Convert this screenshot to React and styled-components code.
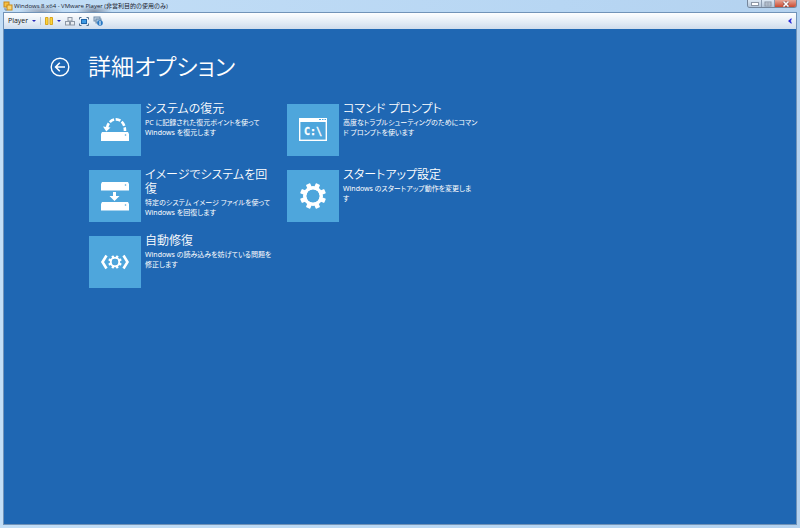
import React from 'react'
import styled, { createGlobalStyle } from 'styled-components'

const GlobalStyle = createGlobalStyle`
  * {
    box-sizing: border-box;
  }
  body {
    margin: 0;
    font-family: 'Noto Sans', 'Noto Sans CJK JP', sans-serif;
  }
  button {
    margin: 0;
    padding: 0;
    border: 0;
    background: none;
    color: inherit;
    font-family: inherit;
    font-feature-settings: inherit;
  }
`

const RestoreIcon = () => (
  <svg viewBox="0 0 52 52" fill="none" aria-hidden="true">
    <path d="M13 28H39L40 30V37H12V30Z" fill="#fff" />
    <path d="M18 24C20 12 36 12 36 27" stroke="#fff" strokeWidth="2.6" strokeDasharray="5 1.6" />
    <path d="M14 22.5L21.5 23.5L17.3 27.6Z" fill="#fff" />
    <circle cx="36.5" cy="31" r="0.8" fill="#4ea6dc" />
  </svg>
)

const ImageIcon = () => (
  <svg viewBox="0 0 52 52" fill="#fff" aria-hidden="true">
    <path d="M13 12H39L40 14V20.5H12V14Z" />
    <path d="M13 32H39L40 34V40.5H12V34Z" />
    <path d="M24 22H27V26H30.5L25.5 31L20.5 26H24Z" />
    <g fill="#4ea6dc">
      <circle cx="36.5" cy="15" r="0.8" />
      <circle cx="36.5" cy="35" r="0.8" />
    </g>
  </svg>
)

const Gear = ({ size, hole, tooth }) => (
  <g fill="#fff">
    {[22.5, 67.5, 112.5, 157.5, 202.5, 247.5, 292.5, 337.5].map((angle) => (
      <rect
        key={angle}
        x={-tooth / 2}
        y={-size}
        width={tooth}
        height={size - hole}
        rx="0.6"
        transform={`rotate(${angle})`}
      />
    ))}
    <circle r={(size * 0.77 + hole) / 2} fill="none" stroke="#fff" strokeWidth={size * 0.77 - hole} />
  </g>
)

const RepairIcon = () => (
  <svg viewBox="0 0 52 52" fill="none" aria-hidden="true">
    <g transform="translate(26 26)">
      <Gear size={6.8} hole={3.4} tooth={2.4} />
    </g>
    <path d="M17.5 19.5L13.5 26L17.5 32.5M34.5 19.5L38.5 26L34.5 32.5" stroke="#fff" strokeWidth="2.6" />
  </svg>
)

const PromptIcon = () => (
  <svg viewBox="0 0 52 52" fill="none" aria-hidden="true">
    <rect x="12.7" y="14.7" width="26.6" height="21.6" stroke="#fff" strokeWidth="1.4" />
    <path d="M12 14H40V18H12Z" fill="#fff" />
    <path d="M32 15.5H34M35 15.5H36.5M37.5 15.5H39" stroke="#4ea6dc" strokeWidth="1.2" />
    <text
      x="26"
      y="31"
      textAnchor="middle"
      fill="#fff"
      stroke="#fff"
      strokeWidth="0.3"
      fontFamily="DejaVu Sans Mono"
      fontWeight="700"
      fontSize="10"
    >
      C:\
    </text>
  </svg>
)

const SettingsIcon = () => (
  <svg viewBox="0 0 52 52" fill="none" aria-hidden="true">
    <g transform="translate(26 26)">
      <Gear size={13} hole={6.6} tooth={4.6} />
    </g>
  </svg>
)

const columns = [
  [
    {
      title: 'システムの復元',
      text: 'PC に記録された復元ポイントを使って\nWindows を復元します',
      icon: <RestoreIcon />,
    },
    {
      title: 'イメージでシステムを回\n復',
      text: '特定のシステム イメージ ファイルを使って\nWindows を回復します',
      icon: <ImageIcon />,
    },
    {
      title: '自動修復',
      text: 'Windows の読み込みを妨げている問題を\n修正します',
      icon: <RepairIcon />,
    },
  ],
  [
    {
      title: 'コマンド プロンプト',
      text: '高度なトラブルシューティングのためにコマン\nド プロンプトを使います',
      icon: <PromptIcon />,
    },
    {
      title: 'スタートアップ設定',
      text: 'Windows のスタートアップ動作を変更しま\nす',
      icon: <SettingsIcon />,
    },
  ],
]

const App = () => {
  return (
    <Window>
      <GlobalStyle />
      <TitleBar>
        <svg width="10" height="10" viewBox="0 0 10 10" fill="none" aria-hidden="true">
          <rect x="1" y="1" width="5" height="5" fill="#f6c146" stroke="#c88716" />
          <rect x="4" y="4" width="5" height="5" fill="#f9d673" stroke="#c88716" />
          <path d="M2 7V9H4" stroke="#77889c" />
        </svg>
        <Caption>Windows 8 x64 - VMware Player (非営利目的の使用のみ)</Caption>
        <WindowButtons>
          <WindowButton aria-label="最小化">
            <svg width="8" height="4" viewBox="0 0 8 4" aria-hidden="true">
              <rect x="0.5" y="0.5" width="7" height="3" fill="#fff" stroke="#8d97a6" />
            </svg>
          </WindowButton>
          <WindowButton aria-label="最大化">
            <svg width="8" height="6" viewBox="0 0 8 6" aria-hidden="true">
              <rect x="1" y="1" width="6" height="4" fill="#ccd5e0" stroke="#8893a3" />
              <path d="M4 1V5M1 3H7" stroke="#9aa6b6" />
            </svg>
          </WindowButton>
          <WindowButton $close aria-label="閉じる">
            <svg width="8" height="6" viewBox="0 0 8 6" aria-hidden="true">
              <path d="M1.5 0.5L6.5 5.5M6.5 0.5L1.5 5.5" stroke="#743d3d" strokeWidth="2.6" />
              <path d="M1.5 0.5L6.5 5.5M6.5 0.5L1.5 5.5" stroke="#fff" strokeWidth="1.6" />
            </svg>
          </WindowButton>
        </WindowButtons>
      </TitleBar>
      <Body>
        <Toolbar>
          <ToolButton>
            Player
            <Arrow />
          </ToolButton>
          <Divider />
          <ToolButton aria-label="一時停止">
            <svg width="8" height="8" viewBox="0 0 8 8" aria-hidden="true">
              <path d="M0.5 0.5H3V7.5H0.5ZM5 0.5H7.5V7.5H5Z" fill="#fbd43c" stroke="#d9a520" />
            </svg>
            <Arrow />
          </ToolButton>
          <ToolButton aria-label="Ctrl+Alt+Del">
            <svg width="10" height="9" viewBox="0 0 10 9" fill="#e9edf2" stroke="#8d98a6" aria-hidden="true">
              <rect x="3" y="0.5" width="4" height="3.5" />
              <rect x="0.5" y="4.5" width="4" height="3.5" />
              <rect x="5.5" y="4.5" width="4" height="3.5" />
            </svg>
          </ToolButton>
          <ToolButton aria-label="全画面">
            <svg width="10" height="9" viewBox="0 0 10 9" fill="none" aria-hidden="true">
              <rect x="2.5" y="2.5" width="5" height="4" fill="#3d9ae4" stroke="#1f64a8" />
              <path d="M0.5 2.5V0.5H2.5M7.5 0.5H9.5V2.5M9.5 6.5V8.5H7.5M2.5 8.5H0.5V6.5" stroke="#56728f" />
            </svg>
          </ToolButton>
          <ToolButton aria-label="ユニティ">
            <svg width="10" height="10" viewBox="0 0 10 10" aria-hidden="true">
              <rect x="1" y="1" width="6" height="4" fill="#cbd9e7" stroke="#6e8cab" />
              <rect x="3" y="3" width="5" height="4" fill="#a3c2df" stroke="#6e8cab" />
              <circle cx="7" cy="7" r="2.8" fill="#2878c4" />
              <path d="M7 5V9" stroke="#fff" />
            </svg>
          </ToolButton>
          <Collapse aria-label="ツールバーを隠す">
            <svg width="4" height="6" viewBox="0 0 4 6" aria-hidden="true">
              <path d="M3.5 0L0 3L3.5 6V4L2.5 3L3.5 2Z" fill="#2a2ad8" />
            </svg>
          </Collapse>
        </Toolbar>
        <Screen>
          <Header>
            <BackButton aria-label="戻る">
              <svg width="20" height="20" viewBox="0 0 20 20" fill="none" stroke="#fff" aria-hidden="true">
                <circle cx="10" cy="10" r="8.8" strokeWidth="1.4" />
                <path d="M15 10H6M9.8 5.8L5.6 10L9.8 14.2" strokeWidth="1.6" />
              </svg>
            </BackButton>
            <Title>詳細オプション</Title>
          </Header>
          <Options>
            {columns.map((items, i) => (
              <Column key={i}>
                {items.map((item) => (
                  <Option key={item.title}>
                    <Tile>{item.icon}</Tile>
                    <OptionText>
                      <OptionTitle>{item.title}</OptionTitle>
                      <Description>{item.text}</Description>
                    </OptionText>
                  </Option>
                ))}
              </Column>
            ))}
          </Options>
        </Screen>
      </Body>
    </Window>
  )
}

const Window = styled.div`
  display: flex;
  flex-direction: column;
  min-height: 100vh;
  padding: 0 3px 3px;
  background: linear-gradient(90deg, #c3def6, #b7d6f3 70%, #b4d2ef);
`

const TitleBar = styled.header`
  display: flex;
  align-items: center;
  gap: 1px;
  height: 12px;
  background:
    radial-gradient(ellipse 22px 7px at 38px 12px, #98a5b9, transparent),
    radial-gradient(ellipse 18px 7px at 91px 12px, #7e8da3, transparent);
`

const Caption = styled.span`
  font-family: 'Open Sans', 'Noto Sans CJK JP', sans-serif;
  font-size: 6px;
  line-height: 12px;
  color: #17202c;
  white-space: nowrap;
`

const WindowButtons = styled.div`
  display: flex;
  align-self: flex-start;
  margin-left: auto;
  height: 8px;
  border: 1px solid #75869b;
  border-top: 0;
  border-radius: 0 0 3px 3px;
  overflow: hidden;
`

const WindowButton = styled.button`
  display: flex;
  align-items: center;
  justify-content: center;
  width: ${({ $close }) => ($close ? '22px' : '13px')};
  background: ${({ $close }) =>
    $close ? 'linear-gradient(#e5a798, #cc4a30)' : 'linear-gradient(#dce8f4, #b4c5d8)'};

  & + & {
    border-left: 1px solid #8b9bb0;
  }
`

const Body = styled.div`
  display: flex;
  flex: 1;
  flex-direction: column;
  border: 1px solid #7193b8;
`

const Toolbar = styled.nav`
  display: flex;
  align-items: center;
  gap: 4px;
  height: 16px;
  padding: 0 4px;
  background: linear-gradient(#fdfeff, #e2ebf5 60%, #cfdcec);
`

const ToolButton = styled.button`
  display: flex;
  align-items: center;
  gap: 4px;
  font-family: 'Open Sans', sans-serif;
  font-size: 7px;
  line-height: 14px;
  color: #111;
`

const Arrow = styled.i`
  border: 2px solid transparent;
  border-top-color: #2626b8;
  border-bottom: 0;
`

const Divider = styled.span`
  width: 1px;
  height: 8px;
  background: #b9c6d6;
`

const Collapse = styled(ToolButton)`
  margin-left: auto;
`

const Screen = styled.main`
  flex: 1;
  padding: 20px 46px;
  background: #1f67b3;
  color: #fff;
  font-feature-settings: 'palt';
`

const Header = styled.div`
  display: flex;
  align-items: center;
  gap: 18px;
  height: 36px;
`

const BackButton = styled.button`
  display: flex;
`

const Title = styled.h1`
  margin: 0;
  font-family: 'Noto Sans CJK JP', sans-serif;
  font-size: 23px;
  font-weight: 350;
  line-height: 32px;
  padding-bottom: 4px;
`

const Options = styled.div`
  display: flex;
  gap: 20px;
  padding: 19px 0 0 39px;
`

const Column = styled.div`
  display: flex;
  flex-direction: column;
  gap: 14px;
  width: 178px;
`

const Option = styled.button`
  display: flex;
  gap: 4px;
  height: 52px;
  text-align: left;
  white-space: pre;
`

const Tile = styled.span`
  flex: none;
  width: 52px;
  height: 52px;
  background: #4ea6dc;

  svg {
    display: block;
  }
`

const OptionText = styled.span`
  display: flex;
  flex-direction: column;
  gap: 2px;
  margin-top: -2px;
`

const OptionTitle = styled.strong`
  font-size: 12px;
  font-weight: 350;
  line-height: 14px;
`

const Description = styled.span`
  font-size: 7px;
  line-height: 10px;
`

export default App
